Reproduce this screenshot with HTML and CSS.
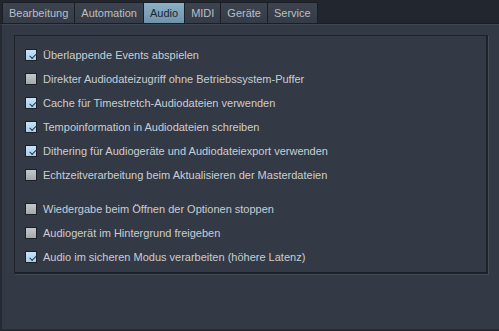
FILE: index.html
```html
<!DOCTYPE html>
<html>
<head>
<meta charset="utf-8">
<title>Optionen</title>
<link rel="stylesheet" href="styles.css">
</head>
<body>
    <div class="tabs">
        <div class="tab">Bearbeitung</div>
        <div class="tab">Automation</div>
        <div class="tab active">Audio</div>
        <div class="tab">MIDI</div>
        <div class="tab">Geräte</div>
        <div class="tab">Service</div>
    </div>
    <div class="page">
        <div class="panel">
            <label class="option"><span class="box checked"></span>Überlappende Events abspielen</label>
            <label class="option"><span class="box"></span>Direkter Audiodateizugriff ohne Betriebssystem-Puffer</label>
            <label class="option"><span class="box checked"></span>Cache für Timestretch-Audiodateien verwenden</label>
            <label class="option"><span class="box checked"></span>Tempoinformation in Audiodateien schreiben</label>
            <label class="option"><span class="box checked"></span>Dithering für Audiogeräte und Audiodateiexport verwenden</label>
            <label class="option"><span class="box"></span>Echtzeitverarbeitung beim Aktualisieren der Masterdateien</label>
            <div class="spacer"></div>
            <label class="option"><span class="box"></span>Wiedergabe beim Öffnen der Optionen stoppen</label>
            <label class="option"><span class="box"></span>Audiogerät im Hintergrund freigeben</label>
            <label class="option"><span class="box checked"></span>Audio im sicheren Modus verarbeiten (höhere Latenz)</label>
        </div>
    </div>
</body>
</html>
```

FILE: styles.css
```css
:root {
    --top-bg: #22272f;
    --page-bg: #343a45;
    --text-color: #c9cdd3;
    --dark-line: #1b1f25;
}

html, body {
    height: 100%;
}

body {
    margin: 0;
    background-color: var(--top-bg);
    font-family: 'Liberation Sans', Arial, sans-serif;
    font-size: 11px;
    color: var(--text-color);
    display: flex;
    flex-direction: column;
}

.tabs {
    display: flex;
    padding: 2px 0 0 2px;
    height: 21px;
    flex-shrink: 0;
    border-bottom: 1px solid var(--dark-line);
}

.tab {
    padding: 0 6px;
    line-height: 20px;
    font-size: 11px;
    background: linear-gradient(#3d444f, #363c47);
    color: #b9bfc7;
    border: 1px solid var(--dark-line);
    border-left: none;
    border-bottom: none;
}

.tab:first-child {
    border-left: 1px solid var(--dark-line);
}

.tab.active {
    background: linear-gradient(#8bb0c6, #6f93aa);
    color: #1c2530;
}

.page {
    flex: 1;
    background-color: var(--page-bg);
    border-left: 2px solid #262b33;
    border-top: 1px solid #404753;
    border-bottom: 2px solid #262b33;
    padding: 10px 11px 0 12px;
}

.panel {
    border: 1px solid #1e2228;
    border-right: 2px solid #1e2228;
    border-bottom: 2px solid #1e2228;
    box-shadow: 1px 1px 0 #454c58;
    padding: 7px 0 3px 10px;
    display: flex;
    flex-direction: column;
}

.option {
    display: flex;
    align-items: center;
    height: 24px;
    flex-shrink: 0;
}

.spacer {
    height: 10px;
    flex-shrink: 0;
}

.box {
    width: 12px;
    height: 12px;
    border: 1px solid #1d2127;
    margin-right: 6px;
    background: linear-gradient(#c4c7cb, #a5a9ae);
    box-sizing: border-box;
    position: relative;
}

.box.checked {
    background: linear-gradient(#c6e3f7, #a8cdea);
}

.box.checked::after {
    content: '';
    position: absolute;
    left: 3px;
    top: 1px;
    width: 6px;
    height: 3px;
    border-left: 1.5px solid #2c3a48;
    border-bottom: 1.5px solid #2c3a48;
    transform: rotate(-45deg) translate(-1px, 2px);
}
```
